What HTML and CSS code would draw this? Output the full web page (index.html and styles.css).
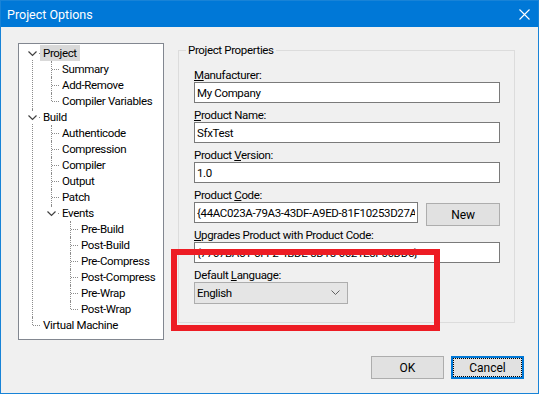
FILE: index.html
```html
<!DOCTYPE html>
<html lang="en">
<head>
  <meta charset="UTF-8">
  <title>Project Options</title>
  <link rel="stylesheet" href="styles.css">
</head>
<body>
  <div class="window">
    <div class="titlebar">
      <span class="title">Project Options</span>
      <svg class="close" width="11" height="11" viewBox="0 0 11 11">
        <path d="M0.5 0.5 L10.5 10.5 M10.5 0.5 L0.5 10.5" stroke="#fff" stroke-width="1.1" fill="none"/>
      </svg>
    </div>

    <div class="content">
      <div class="panes">
        <!-- Options tree -->
        <div class="tree-box">
          <ul class="tree">
            <li>
              <div class="node"><span class="exp"><svg width="11" height="11" viewBox="0 0 11 11"><path d="M1.5 3.5 L5.5 7.5 L9.5 3.5" stroke="#404040" stroke-width="1.2" fill="none"/></svg></span><span class="label selected">Project</span></div>
              <ul>
                <li><div class="node"><span class="label">Summary</span></div></li>
                <li><div class="node"><span class="label">Add-Remove</span></div></li>
                <li><div class="node"><span class="label">Compiler Variables</span></div></li>
              </ul>
            </li>
            <li>
              <div class="node"><span class="exp"><svg width="11" height="11" viewBox="0 0 11 11"><path d="M1.5 3.5 L5.5 7.5 L9.5 3.5" stroke="#404040" stroke-width="1.2" fill="none"/></svg></span><span class="label">Build</span></div>
              <ul>
                <li><div class="node"><span class="label">Authenticode</span></div></li>
                <li><div class="node"><span class="label">Compression</span></div></li>
                <li><div class="node"><span class="label">Compiler</span></div></li>
                <li><div class="node"><span class="label">Output</span></div></li>
                <li><div class="node"><span class="label">Patch</span></div></li>
                <li>
                  <div class="node"><span class="exp"><svg width="11" height="11" viewBox="0 0 11 11"><path d="M1.5 3.5 L5.5 7.5 L9.5 3.5" stroke="#404040" stroke-width="1.2" fill="none"/></svg></span><span class="label">Events</span></div>
                  <ul>
                    <li><div class="node"><span class="label">Pre-Build</span></div></li>
                    <li><div class="node"><span class="label">Post-Build</span></div></li>
                    <li><div class="node"><span class="label">Pre-Compress</span></div></li>
                    <li><div class="node"><span class="label">Post-Compress</span></div></li>
                    <li><div class="node"><span class="label">Pre-Wrap</span></div></li>
                    <li><div class="node"><span class="label">Post-Wrap</span></div></li>
                  </ul>
                </li>
              </ul>
            </li>
            <li><div class="node"><span class="label">Virtual Machine</span></div></li>
          </ul>
        </div>

        <!-- Project properties -->
        <fieldset class="group">
          <legend>Project Properties</legend>
          <div class="fields">
            <label><u>M</u>anufacturer:</label>
            <input class="text-input" type="text" value="My Company">

            <label><u>P</u>roduct Name:</label>
            <input class="text-input" type="text" value="SfxTest">

            <label>Product <u>V</u>ersion:</label>
            <input class="text-input" type="text" value="1.0">

            <label>Product <u>C</u>ode:</label>
            <div class="code-row">
              <input class="text-input code" type="text" value="{44AC023A-79A3-43DF-A9ED-81F10253D27A}">
              <button class="btn new-btn">New</button>
            </div>

            <label><u>U</u>pgrades Product with Product Code:</label>
            <input class="text-input" type="text" value="{7767BA51-5FF2-4BDE-8D18-6621E8F66DD5}">

            <label>Default <u>L</u>anguage:</label>
            <div class="combo">
              <span>English</span>
              <svg width="9" height="6" viewBox="0 0 9 6"><path d="M0.5 0.5 L4.5 4.5 L8.5 0.5" stroke="#606060" stroke-width="1" fill="none"/></svg>
            </div>
          </div>
        </fieldset>
      </div>

      <div class="footer">
        <button class="btn">OK</button>
        <button class="btn default">Cancel</button>
      </div>
    </div>

    <!-- red highlight drawn over the dialog -->
    <div class="callout"></div>
  </div>
</body>
</html>
```

FILE: styles.css
```css
body {
  margin: 0;
  background: #fff;
  font-family: Roboto, "Open Sans", sans-serif;
  font-size: 11.5px;
  letter-spacing: -0.35px;
  color: #000;
}

.window {
  position: relative;
  width: 539px;
  height: 394px;
  box-sizing: border-box;
  border: 1px solid #1883d7;
  background: #f0f0f0;
}

/* Title bar */
.titlebar {
  height: 26px;
  background: #0078d7;
  color: #fff;
  display: flex;
  align-items: center;
  justify-content: space-between;
  padding: 0 8px 0 6px;
  font-size: 12.5px;
  letter-spacing: 0;
}

.close {
  display: block;
}

.content {
  padding: 16px 14px 0 17px;
}

.panes {
  display: flex;
  gap: 14px;
}

/* Tree */
.tree-box {
  width: 146px;
  height: 297px;
  box-sizing: border-box;
  border: 1px solid #828790;
  background: #fff;
  padding-top: 1px;
}

.tree, .tree ul {
  list-style: none;
  margin: 0;
  padding: 0;
}

.tree ul {
  padding-left: 19px;
}

.tree li {
  position: relative;
}

.tree li::before {
  content: "";
  position: absolute;
  left: 13px;
  top: 0;
  bottom: 0;
  border-left: 1px dotted #8c8c8c;
}

.tree > li:first-child::before {
  top: 8px;
}

.tree li:last-child::before {
  bottom: auto;
  height: 8px;
}

.node {
  position: relative;
  height: 16px;
  display: flex;
  align-items: center;
  padding-left: 21px;
}

.node::before {
  content: "";
  position: absolute;
  left: 14px;
  top: 8px;
  width: 7px;
  border-top: 1px dotted #8c8c8c;
}

.exp {
  position: absolute;
  left: 7px;
  top: 2px;
  width: 13px;
  height: 12px;
  background: #fff;
  z-index: 1;
  display: flex;
  justify-content: center;
  align-items: center;
}

.exp svg {
  display: block;
}

.label {
  padding: 1px 3px 0;
  line-height: 15px;
  white-space: nowrap;
}

.label.selected {
  background: #d9d9d9;
}

/* Group box */
.group {
  width: 337px;
  height: 280px;
  box-sizing: border-box;
  margin: 0;
  padding: 0 6px 0 7px;
  border: 1px solid #dcdcdc;
  min-width: 0;
}

.group legend {
  padding: 0 2px;
  line-height: 15px;
}

.fields {
  display: flex;
  flex-direction: column;
  padding: 9px 8px 0 8px;
}

.fields label {
  display: block;
  height: 15px;
  box-sizing: border-box;
  padding-top: 1px;
  line-height: 14px;
}

.fields label + * {
  margin-bottom: 4px;
}

.text-input {
  height: 21px;
  box-sizing: border-box;
  border: 1px solid #7a7a7a;
  padding: 0 2px;
  margin: 0;
  font-family: inherit;
  font-size: 11.5px;
  letter-spacing: -0.35px;
  color: #000;
  background: #fff;
  outline: none;
}

.code-row {
  display: flex;
  align-items: flex-start;
  height: 21px;
}

.text-input.code {
  width: 225px;
}

.btn {
  height: 23px;
  width: 73px;
  box-sizing: border-box;
  border: 1px solid #adadad;
  background: #e1e1e1;
  font-family: inherit;
  font-size: 12px;
  letter-spacing: 0;
  color: #000;
  padding: 0;
  margin: 0;
}

.new-btn {
  width: 74px;
  margin: 1px 0 0 8px;
}

.btn.default {
  border: 2px solid #0078d7;
  outline: 1px dotted #000;
  outline-offset: -3px;
}

.combo {
  width: 154px;
  height: 22px;
  box-sizing: border-box;
  border: 1px solid #adadad;
  background: #e5e5e5;
  display: flex;
  align-items: center;
  justify-content: space-between;
  padding: 0 7px 0 2px;
}

.combo svg {
  display: block;
}

/* Dialog buttons */
.footer {
  display: flex;
  justify-content: flex-end;
  gap: 7px;
  margin-top: 16px;
}

/* Annotation rectangle */
.callout {
  position: absolute;
  left: 170px;
  top: 248px;
  width: 269px;
  height: 82px;
  box-sizing: border-box;
  border: 6px solid #ed1c24;
}
```
